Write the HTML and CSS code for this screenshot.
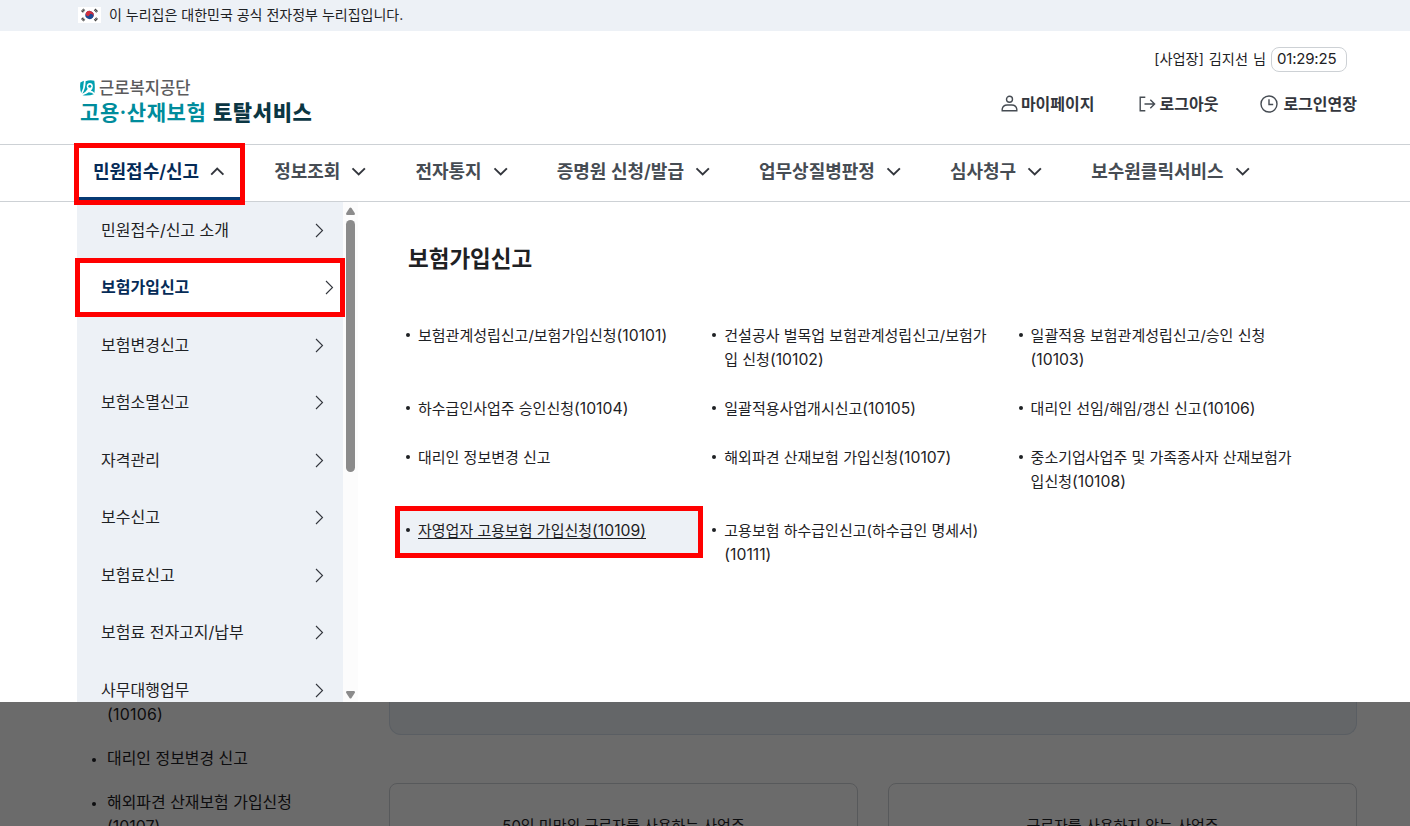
FILE: index.html
```html
<!DOCTYPE html>
<html lang="ko">
<head>
    <meta charset="UTF-8">
    <meta name="viewport" content="width=device-width, initial-scale=1.0">
    <title>고용·산재보험 토탈서비스</title>
    <link rel="stylesheet" href="styles.css">
</head>
<body>
    <svg class="defs" width="0" height="0">
        <symbol id="down" viewBox="0 0 16 16"><path d="M1.5 5.3 7.7 11.5l6.2-6.2" fill="none" stroke="currentColor" stroke-width="1.9"/></symbol>
        <symbol id="up" viewBox="0 0 16 16"><path d="M1.2 11.7 7.2 5.5l6.2 6.2" fill="none" stroke="currentColor" stroke-width="1.9"/></symbol>
        <symbol id="right" viewBox="0 0 16 16"><path d="M5 2 11.5 8.5 5 15" fill="none" stroke="currentColor" stroke-width="1.1"/></symbol>
    </svg>

    <div class="gov">
        <svg class="flag" width="23" height="16" viewBox="0 0 23 16">
            <rect width="23" height="16" fill="#fff"/>
            <g transform="rotate(28 11.5 8)">
                <circle cx="11.5" cy="8" r="4.1" fill="#1d4a94"/>
                <path d="M7.4 8a4.1 4.1 0 0 1 8.2 0z" fill="#d0303f"/>
                <circle cx="9.45" cy="8" r="2.05" fill="#d0303f"/>
                <circle cx="13.55" cy="8" r="2.05" fill="#1d4a94"/>
            </g>
            <g stroke="#333" stroke-width="2.6" stroke-dasharray="1 .4">
                <path d="m4 4.9 2.3-2.6M16.8 2.3l2.3 2.6M4 11.1l2.3 2.6M16.8 13.7l2.3-2.6"/>
            </g>
        </svg>
        <span>이 누리집은 대한민국 공식 전자정부 누리집입니다.</span>
    </div>

    <header class="header">
        <div class="logo">
            <div class="logo-top">
                <svg width="15" height="16" viewBox="0 0 15 16">
                    <path d="M.4 2.5 3.8.8Q4 7.5 1.2 13-.5 8 .4 2.5z" fill="#00a0b0"/>
                    <path d="M5.6 1.2Q10-.3 14.3.8q1 6.200.1 12.200-1-2-3.600-2.600 2.100-1.600 2.100-4.100Q12.600 3 9.800 3 7 3.200 6.700 6.200q0 1.600 1 2.900Q6 12 2.300 13.800 5.700 8.500 5.600 1.200z" fill="#00a0b0"/>
                    <circle cx="9.8" cy="6.3" r="1.5" fill="#00a0b0"/>
                    <path d="M2.500 15.200Q7 13.700 8.800 12.200q3 0 5 2-4.800 1.800-11.300 1z" fill="#00a0b0"/>
                </svg>
                <span>근로복지공단</span>
            </div>
            <div class="logo-main">고용<i>·</i>산재보험 <b>토탈서비스</b></div>
        </div>
        <div class="util">
            <div class="user"><span>[사업장] 김지선 님</span><span class="timer">01:29:25</span></div>
            <div class="links">
                <a class="my"><svg width="18" height="18" viewBox="0 0 18 18"><circle cx="8.5" cy="4.3" r="3"/><path d="M1.2 15.700v-1.500Q1.800 10 6.200 10h4.600q4.400 0 5 4.200v1.500z"/></svg><span>마이페이지</span></a>
                <a><svg width="18" height="18" viewBox="0 0 18 18"><path d="M7.3 2.2H2.2v13.6h5.100M6.500 9h10M12.300 4.700 16.600 9l-4.300 4.300"/></svg><span>로그아웃</span></a>
                <a class="ext"><svg width="18" height="18" viewBox="0 0 18 18"><circle cx="9" cy="9" r="8"/><path d="M9 4.3V9.500h4.200"/></svg><span>로그인연장</span></a>
            </div>
        </div>
    </header>

    <nav class="nav">
        <a class="on"><span>민원접수/신고</span><svg><use href="#up"/></svg></a>
        <a><span>정보조회</span><svg><use href="#down"/></svg></a>
        <a><span>전자통지</span><svg><use href="#down"/></svg></a>
        <a><span>증명원 신청/발급</span><svg><use href="#down"/></svg></a>
        <a><span>업무상질병판정</span><svg><use href="#down"/></svg></a>
        <a><span>심사청구</span><svg><use href="#down"/></svg></a>
        <a><span>보수원클릭서비스</span><svg><use href="#down"/></svg></a>
    </nav>

    <div class="mega">
        <ul class="side">
            <li>민원접수/신고 소개<svg><use href="#right"/></svg></li>
            <li class="on">보험가입신고<svg><use href="#right"/></svg></li>
            <li>보험변경신고<svg><use href="#right"/></svg></li>
            <li>보험소멸신고<svg><use href="#right"/></svg></li>
            <li>자격관리<svg><use href="#right"/></svg></li>
            <li>보수신고<svg><use href="#right"/></svg></li>
            <li>보험료신고<svg><use href="#right"/></svg></li>
            <li>보험료 전자고지/납부<svg><use href="#right"/></svg></li>
            <li>사무대행업무<svg><use href="#right"/></svg></li>
        </ul>
        <div class="scroll">
            <svg width="11" height="8" viewBox="0 0 11 8"><path d="M4.5 1Q5.5 0 6.5 1L10 6.5 9.5 8h-8L1 6.5z" fill="#8b8b8b"/></svg>
            <div class="thumb"></div>
            <svg width="11" height="8" viewBox="0 0 11 8"><path d="M4.5 7Q5.5 8 6.5 7L10 1.5 9.5 0h-8L1 1.5z" fill="#8b8b8b"/></svg>
        </div>
        <div class="panel">
            <h2>보험가입신고</h2>
            <ul class="grid">
                <li>보험관계성립신고/보험가입신청<span class="code">(10101)</span></li>
                <li>건설공사 벌목업 보험관계성립신고/보험가<br>입 신청<span class="code">(10102)</span></li>
                <li>일괄적용 보험관계성립신고/승인 신청<br><span class="code">(10103)</span></li>
                <li>하수급인사업주 승인신청<span class="code">(10104)</span></li>
                <li>일괄적용사업개시신고<span class="code">(10105)</span></li>
                <li>대리인 선임/해임/갱신 신고<span class="code">(10106)</span></li>
                <li>대리인 정보변경 신고</li>
                <li>해외파견 산재보험 가입신청<span class="code">(10107)</span></li>
                <li>중소기업사업주 및 가족종사자 산재보험가<br>입신청<span class="code">(10108)</span></li>
                <li class="hover"><u>자영업자 고용보험 가입신청<span class="code">(10109)</span></u></li>
                <li>고용보험 하수급인신고(하수급인 명세서)<br><span class="code">(10111)</span></li>
            </ul>
        </div>
    </div>

    <main class="page">
        <ul class="lnb">
            <li class="cont">(10106)</li>
            <li>대리인 정보변경 신고</li>
            <li>해외파견 산재보험 가입신청<br>(10107)</li>
        </ul>
        <div class="content">
            <div class="box"></div>
            <div class="cards">
                <div class="card">50인 미만의 근로자를 사용하는 사업주</div>
                <div class="card">근로자를 사용하지 않는 사업주</div>
            </div>
        </div>
        <div class="dim"></div>
    </main>

    <div class="mark mark-nav"></div>
    <div class="mark mark-side"></div>
    <div class="mark mark-item"></div>
</body>
</html>
```
FILE: styles.css
```css
* {
    box-sizing: border-box;
}
body {
    position: relative;
    width: 1410px;
    height: 826px;
    margin: 0;
    overflow: hidden;
    font-family: Inter, "Noto Sans CJK KR", sans-serif;
    font-size: 15px;
    color: #1e2124;
    background: #fff;
}
ul {
    list-style: none;
    margin: 0;
    padding: 0;
}
.defs {
    position: absolute;
}
.code {
    font-size: 1.05em;
    line-height: 1;
}

/* top */
.gov {
    display: flex;
    align-items: center;
    gap: 8px;
    height: 31px;
    padding: 0 0 1px 78px;
    background: #edf1f6;
    font-size: 14px;
}
.gov span {
    padding-bottom: 2px;
}
.header {
    display: flex;
    justify-content: space-between;
    height: 113px;
    padding: 16px 53px 0 80px;
}
.logo {
    padding-top: 31px;
}
.logo-top {
    display: flex;
    align-items: center;
    gap: 4px;
    height: 20px;
    color: #5b5b5d;
    font-size: 16.6px;
    font-weight: 500;
}
.logo-top span {
    padding-bottom: 2px;
}
.logo-main {
    height: 28px;
    line-height: 26px;
    font-family: "Noto Sans CJK KR", sans-serif;
    font-size: 21px;
    font-weight: 700;
    letter-spacing: 0.6px;
    color: #008c9c;
    white-space: nowrap;
}
.logo-main i {
    font-style: normal;
    font-weight: 500;
}
.logo-main b {
    color: #0b3643;
}
.user {
    display: flex;
    justify-content: flex-end;
    align-items: center;
    gap: 5px;
    height: 25px;
    padding-right: 10px;
    font-size: 14.2px;
    word-spacing: 1px;
}
.user span:first-child {
    padding-bottom: 3px;
}
.timer {
    width: 76px;
    height: 25px;
    padding-left: 5px;
    border: 1px solid #cdd1d5;
    border-radius: 8px;
    line-height: 22px;
    font-size: 15px;
    letter-spacing: -0.2px;
}
.links {
    display: flex;
    gap: 42px;
    margin-top: 20px;
    font-size: 16px;
    font-weight: 600;
    color: #33363d;
}
.links a {
    display: flex;
    align-items: center;
    gap: 4px;
    height: 24px;
}
.links a.my {
    gap: 2px;
    margin-right: 1px;
}
.links a.ext {
    gap: 5px;
}
.links span {
    padding-bottom: 2px;
}
.links svg {
    fill: none;
    stroke: #464c53;
    stroke-width: 1.4;
}

/* nav */
.nav {
    display: flex;
    gap: 16px;
    height: 58px;
    padding-left: 77px;
    border-top: 1px solid #cdd1d5;
    border-bottom: 1px solid #cdd1d5;
}
.nav a {
    display: flex;
    align-items: center;
    gap: 11px;
    height: 56px;
    padding: 0 16px;
    border-bottom: 4px solid transparent;
    font-size: 18px;
    font-weight: 600;
    color: #464c53;
    white-space: nowrap;
}
.nav a.on {
    border-color: #063a74;
    color: #052b57;
}
.nav span {
    padding-bottom: 3px;
}
.nav svg {
    width: 16px;
    height: 16px;
    color: #33363d;
}

/* mega menu */
.mega {
    display: flex;
    height: 500px;
    padding-left: 77px;
    background: #fff;
}
.side {
    width: 266px;
    overflow: hidden;
    background: #edf1f6;
    font-size: 16px;
}
.side li {
    display: flex;
    justify-content: space-between;
    align-items: center;
    height: 57.5px;
    padding: 0 16px 4px 24px;
}
.side li.on {
    padding-right: 6px;
    background: #fff;
    font-weight: 700;
    color: #052b57;
}
.side svg {
    width: 16px;
    height: 16px;
    margin-top: 2px;
    color: #33363d;
}
.scroll {
    display: flex;
    flex-direction: column;
    align-items: center;
    width: 15px;
    padding: 5px 0 3px;
    background: #fcfcfc;
}
.thumb {
    width: 9px;
    height: 252px;
    margin: 5px 0 auto;
    border-radius: 5px;
    background: #8b8b8b;
}
.panel {
    padding: 41px 0 0 42px;
}
.panel h2 {
    height: 32px;
    margin: 0 0 37px 8px;
    line-height: 32px;
    font-size: 22.5px;
    font-weight: 600;
}
.grid {
    display: grid;
    grid-template-columns: repeat(3, 298px);
    column-gap: 8.3px;
}
.grid li {
    position: relative;
    padding: 12.2px 0 12.2px 18px;
    line-height: 24.3px;
    white-space: nowrap;
}
.grid li::before, .lnb li::before {
    content: "";
    position: absolute;
    left: 6px;
    top: 21px;
    width: 4px;
    height: 4px;
    border-radius: 50%;
    background: #1e2124;
}
.grid li.hover {
    height: 48px;
    background: #edf1f6;
}
.grid u {
    text-underline-offset: 2px;
}

/* page below the menu */
.page {
    position: relative;
    display: flex;
    height: 124px;
    overflow: hidden;
}
.dim {
    position: absolute;
    inset: 0;
    background: rgba(0, 0, 0, 0.58);
}
.lnb {
    width: 389px;
    padding: 1px 0 0 86px;
    font-size: 15.95px;
    line-height: 24px;
}
.lnb li {
    position: relative;
    margin-bottom: 19.8px;
    padding-left: 21px;
}
.lnb li::before {
    top: 11px;
}
.lnb li.cont {
    letter-spacing: 0.2px;
}
.lnb li.cont::before {
    display: none;
}
.content {
    width: 968px;
}
.box {
    height: 33px;
    border: 1px solid #d6e0eb;
    border-top: 0;
    border-radius: 0 0 12px 12px;
    background: #eef2f7;
}
.cards {
    display: flex;
    gap: 30px;
    margin-top: 48px;
}
.card {
    flex: 1;
    height: 120px;
    padding-top: 30px;
    border: 1px solid #d0d3d8;
    border-radius: 8px;
    line-height: 24px;
    text-align: center;
}

/* red boxes */
.mark {
    position: absolute;
    border: 5px solid #f00;
}
.mark-nav {
    left: 74px;
    top: 143px;
    width: 171px;
    height: 62px;
}
.mark-side {
    left: 75px;
    top: 258px;
    width: 270px;
    height: 59px;
}
.mark-item {
    left: 395px;
    top: 506px;
    width: 308px;
    height: 52px;
}
```
